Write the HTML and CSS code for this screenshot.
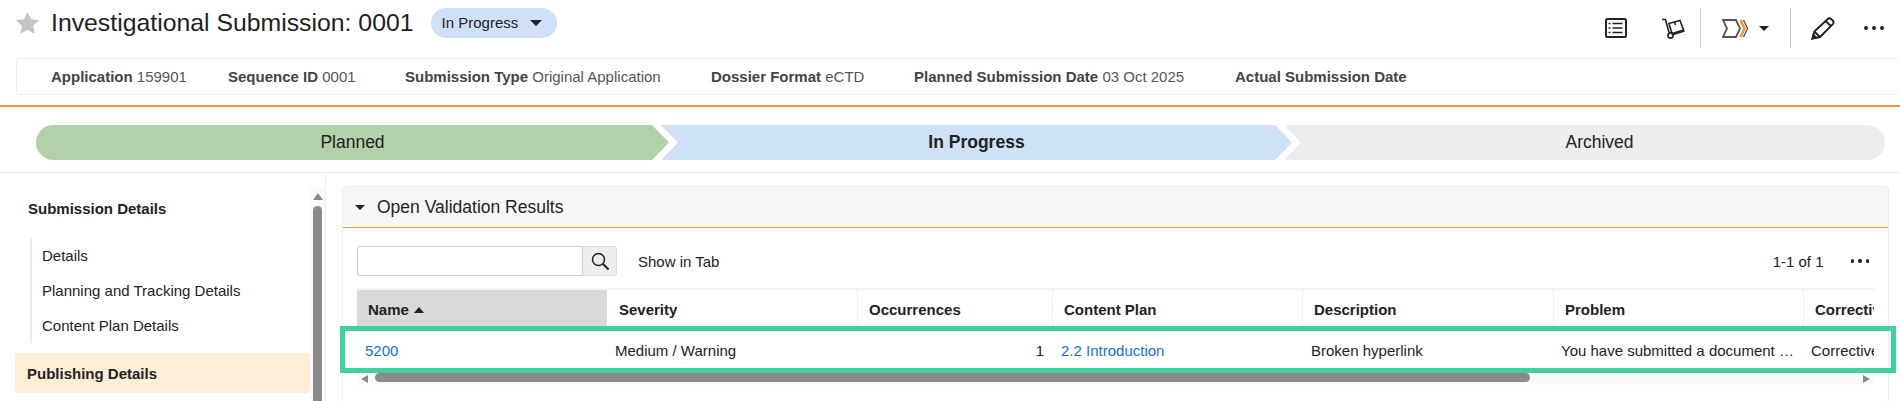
FILE: index.html
```html
<!DOCTYPE html>
<html lang="en">
<head>
  <meta charset="UTF-8">
  <meta name="viewport" content="width=device-width, initial-scale=1.0">
  <title>Investigational Submission: 0001</title>
  <link rel="stylesheet" href="styles.css">
</head>
<body>

  <!-- Title row -->
  <div class="top">
    <svg class="star" viewBox="0 0 24 23"><path d="M12 0l3.600 7.700 8.400 1-6.200 5.700 1.700 8.300L12 18.600 4.500 22.700l1.700-8.300L0 8.700l8.400-1z"/></svg>
    <h1 class="title">Investigational Submission: 0001</h1>
    <div class="pill">In Progress <span class="caret"></span></div>

    <div class="actions">
      <svg class="act-list" viewBox="0 0 22 20" fill="none" stroke="#222">
        <rect x="1" y="1" width="20" height="18" rx="1.500" stroke-width="2"/>
        <path d="M7.500 5.500h10M7.500 10h10M7.500 14.500h10" stroke-width="1.600"/>
        <path d="M3.500 5.500h2M3.500 10h2M3.500 14.500h2" stroke-width="1.600"/>
      </svg>
      <svg class="act-cart" viewBox="0 0 23 21" fill="none" stroke="#222" stroke-width="1.600">
        <path d="M0 1.500h3.500l3.500 13"/>
        <circle cx="8.500" cy="17.500" r="2.600"/>
        <path d="M11 16.500l11.500-3.500"/>
        <path d="M7 5.500l11-3 3.500 9.500-11.500 3.500z"/>
        <path d="M12.500 4l1 3"/>
      </svg>
      <span class="sep"></span>
      <svg class="act-stage" viewBox="0 0 27 19" fill="none" stroke-width="1.800">
        <path d="M1 1h13l4 8.500-4 8.500H1l4-8.500z" stroke="#555"/>
        <path d="M18.500 1l4 8.500-4 8.500" stroke="#f09a2e" stroke-width="2.600"/>
        <path d="M21.500 1l4 8.500-4 8.500" stroke="#555" stroke-width="1.400"/>
      </svg>
      <span class="caret act-caret"></span>
      <span class="sep"></span>
      <svg class="act-pencil" viewBox="0 0 24 23" fill="none" stroke="#222" stroke-width="1.900">
        <path d="M1.500 21.500l1.800-7L16.500 2.200c1.200-1.100 2.800-1.100 3.900 0l1.300 1.300c1.100 1.200 1 2.800-.1 3.900L9 20z"/>
        <path d="M3.300 14.500L9 20M14.500 4l5.800 5.500"/>
        <path d="M1.500 21.500l3.500-1-2.500-2.500z" fill="#222"/>
      </svg>
      <span class="dots"><i></i><i></i><i></i></span>
    </div>
  </div>

  <!-- Summary fields -->
  <div class="meta">
    <span class="field f1"><b>Application</b> 159901</span>
    <span class="field f2"><b>Sequence ID</b> 0001</span>
    <span class="field f3"><b>Submission Type</b> Original Application</span>
    <span class="field f4"><b>Dossier Format</b> eCTD</span>
    <span class="field f5"><b>Planned Submission Date</b> 03 Oct 2025</span>
    <span class="field"><b>Actual Submission Date</b></span>
  </div>

  <div class="rule"></div>

  <!-- Lifecycle stages -->
  <div class="stages">
    <div class="stage planned">Planned</div>
    <div class="stage current">In Progress</div>
    <div class="stage archived">Archived</div>
  </div>

  <div class="main">
    <div class="side">
      <div class="side-nav">
        <div class="nav-head">Submission Details</div>
        <ul class="nav-sub">
          <li>Details</li>
          <li>Planning and Tracking Details</li>
          <li>Content Plan Details</li>
        </ul>
        <div class="nav-head nav-active">Publishing Details</div>
      </div>
      <div class="side-scroll">
        <span class="arrow-up"></span>
        <span class="side-thumb"></span>
      </div>
    </div>

    <div class="content">
      <div class="panel">
        <div class="panel-head">
          <span class="caret panel-caret"></span>
          <span>Open Validation Results</span>
        </div>
        <div class="panel-body">
          <div class="tools">
            <input class="search" type="text">
            <button class="search-btn">
              <svg viewBox="0 0 18 18" width="18" height="18" fill="none" stroke="#222" stroke-width="1.500"><circle cx="7.500" cy="7.500" r="6"/><path d="M12 12l5.500 5.500" stroke-width="2"/></svg>
            </button>
            <span class="show-tab">Show in Tab</span>
            <span class="count">1-1 of 1</span>
            <span class="dots small"><i></i><i></i><i></i></span>
          </div>

          <div class="grid-wrap">
            <div class="row head">
              <div class="c c-name sorted">Name<span class="sort-up"></span></div>
              <div class="c c-sev">Severity</div>
              <div class="c c-occ">Occurrences</div>
              <div class="c c-plan">Content Plan</div>
              <div class="c c-desc">Description</div>
              <div class="c c-prob">Problem</div>
              <div class="c c-corr">Corrective Action</div>
            </div>
            <div class="row body-row">
              <div class="c c-name"><a href="#">5200</a></div>
              <div class="c c-sev">Medium / Warning</div>
              <div class="c c-occ num">1</div>
              <div class="c c-plan"><a href="#">2.2 Introduction</a></div>
              <div class="c c-desc">Broken hyperlink</div>
              <div class="c c-prob">You have submitted a document that contains a broken link</div>
              <div class="c c-corr">Corrective action</div>
            </div>
            <div class="hscroll">
              <span class="arrow-left"></span>
              <span class="h-thumb"></span>
              <span class="arrow-right"></span>
            </div>
            <!-- highlight box over the row -->
            <div class="mark"></div>
          </div>
        </div>
      </div>
    </div>
  </div>

</body>
</html>
```

FILE: styles.css
```css
* {
  margin: 0;
  padding: 0;
  box-sizing: border-box;
}

html, body {
  height: 401px;
  overflow: hidden;
  background: #fff;
  font-family: "Liberation Sans", Arial, sans-serif;
  font-size: 15px;
  color: #222;
}

.caret {
  display: inline-block;
  width: 0;
  height: 0;
  border-left: 6px solid transparent;
  border-right: 6px solid transparent;
  border-top: 6px solid #222;
}

/* Title row */
.top {
  display: flex;
  align-items: center;
  height: 46px;
  padding-left: 16px;
}

.star {
  width: 23px;
  height: 22px;
  fill: #c4c4c4;
}

.title {
  font-size: 24.800px;
  font-weight: 400;
  margin-left: 12px;
  color: #1f1f1f;
}

.pill {
  display: flex;
  align-items: center;
  height: 30px;
  width: 126px;
  margin-left: 17px;
  margin-top: -1px;
  padding-left: 11px;
  border-radius: 15px;
  background: #cfe0f9;
}

.pill .caret {
  margin-left: 12px;
}

.actions {
  display: flex;
  align-items: center;
  margin-left: auto;
  height: 46px;
  padding-top: 10px;
}

.act-list {
  width: 22px;
  height: 20px;
  margin-right: 35px;
}

.act-cart {
  width: 23px;
  height: 21px;
  margin-right: 15px;
}

.sep {
  display: block;
  width: 1px;
  height: 40px;
  background: #c8c8c8;
}

.act-stage {
  width: 27px;
  height: 19px;
  margin-left: 21px;
}

.act-caret {
  margin-left: 10px;
  margin-right: 21px;
  border-left-width: 5px;
  border-right-width: 5px;
  border-top-width: 5px;
}

.act-pencil {
  width: 24px;
  height: 23px;
  margin-left: 20px;
}

.dots {
  display: flex;
  gap: 4px;
  margin-left: 29px;
  margin-right: 16px;
}

.dots i {
  display: block;
  width: 4px;
  height: 4px;
  border-radius: 50%;
  background: #222;
}

/* Summary fields */
.meta {
  display: flex;
  align-items: center;
  height: 37px;
  margin: 12px 0 0 16px;
  padding-left: 34px;
  border: 1px solid #eee;
  border-right: none;
  border-radius: 3px 0 0 3px;
  color: #555;
}

.field b {
  color: #444;
}

.f1 { width: 177px; }
.f2 { width: 177px; }
.f3 { width: 306px; }
.f4 { width: 203px; }
.f5 { width: 321px; }

.rule {
  height: 2px;
  margin-top: 10px;
  background: #f09a2e;
}

/* Lifecycle stages */
.stages {
  display: flex;
  height: 35px;
  margin: 18px 15px 0 36px;
  font-size: 17.500px;
}

.stage {
  display: flex;
  align-items: center;
  justify-content: center;
}

.planned {
  width: 633px;
  background: #b2d1a8;
  border-radius: 18px 0 0 18px;
  clip-path: polygon(0 0, 616px 0, 100% 50%, 616px 100%, 0 100%);
}

.current {
  width: 631px;
  margin-left: -8px;
  background: #cfe0f9;
  font-weight: 700;
  clip-path: polygon(0 0, 614px 0, 100% 50%, 614px 100%, 0 100%, 17px 50%);
}

.archived {
  flex: 1;
  margin-left: -8px;
  padding-left: 30px;
  background: #ededed;
  border-radius: 0 18px 18px 0;
  clip-path: polygon(0 0, 100% 0, 100% 100%, 0 100%, 17px 50%);
}

/* Sidebar and content */
.main {
  display: flex;
  height: 229px;
  margin-top: 12px;
  border-top: 1px solid #eee;
  overflow: hidden;
}

.side {
  display: flex;
  flex: none;
  width: 326px;
  border-right: 1px solid #eee;
}

.side-nav {
  width: 310px;
  padding: 17px 0 0 15px;
}

.nav-head {
  height: 40px;
  padding-left: 13px;
  line-height: 38px;
  font-weight: 700;
}

.nav-sub {
  list-style: none;
  margin: 8px 0 10px 15px;
  padding-left: 10px;
  border-left: 2px solid #eee;
}

.nav-sub li {
  height: 35px;
  line-height: 35px;
}

.nav-active {
  padding-left: 12px;
  background: #feeed6;
  border-radius: 2px;
  line-height: 41px;
}

.side-scroll {
  display: flex;
  flex-direction: column;
  align-items: center;
  width: 15px;
  margin-top: 15px;
  padding-top: 5px;
  background: #fafafa;
}

.arrow-up {
  width: 0;
  height: 0;
  border-left: 5px solid transparent;
  border-right: 5px solid transparent;
  border-bottom: 7px solid #8b8b8b;
}

.side-thumb {
  flex: 1;
  width: 9px;
  margin-top: 6px;
  background: #8b8b8b;
  border-radius: 5px 5px 0 0;
}

.content {
  flex: 1;
  min-width: 0;
  padding: 13px 11px 0 16px;
}

.panel {
  height: 216px;
  border: 1px solid #eee;
  border-radius: 3px;
}

.panel-head {
  display: flex;
  align-items: center;
  height: 41px;
  padding-left: 12px;
  background: #f7f7f7;
  border-bottom: 1px solid #f09a2e;
  font-size: 17.500px;
}

.panel-caret {
  margin-right: 12px;
  border-left-width: 5px;
  border-right-width: 5px;
  border-top-width: 5px;
}

.panel-body {
  padding: 18px 14px 0 14px;
}

.tools {
  display: flex;
  align-items: center;
  height: 30px;
}

.search {
  width: 226px;
  height: 30px;
  border: 1px solid #ccc;
  border-radius: 3px 0 0 3px;
}

.search-btn {
  display: flex;
  align-items: center;
  justify-content: center;
  width: 34px;
  height: 30px;
  background: #eee;
  border: 1px solid #ddd;
  border-left: none;
  border-radius: 0 3px 3px 0;
}

.show-tab {
  margin-left: 21px;
}

.count {
  margin-left: auto;
}

.dots.small {
  margin: 0 5px 0 27px;
}

.dots.small i {
  width: 3.500px;
  height: 3.500px;
}

.grid-wrap {
  position: relative;
  margin-top: 12px;
}

.row {
  display: flex;
  overflow: hidden;
}

.head {
  height: 38px;
  border-top: 2px solid #f3f3f3;
  font-weight: 700;
}

.head .c {
  line-height: 40px;
  padding-left: 11px;
  border-right: 1px solid #eee;
}

.head .sorted {
  background: #d9d9d9;
  border-right: none;
}

.head .c-sev {
  padding-left: 12px;
}

.sort-up {
  display: inline-block;
  width: 0;
  height: 0;
  margin-left: 5px;
  margin-bottom: 2px;
  border-left: 5px solid transparent;
  border-right: 5px solid transparent;
  border-bottom: 6px solid #222;
}

.body-row {
  height: 47px;
  padding-top: 2px;
  align-items: center;
}

.body-row .c {
  padding: 0 13px 0 8px;
}

.body-row .c-prob {
  padding: 0 10px 0 7px;
}

.body-row .c-corr {
  padding-left: 7px;
}

.body-row .num {
  padding: 0 9px 0 0;
  text-align: right;
}

.c {
  flex: none;
  white-space: nowrap;
  overflow: hidden;
  text-overflow: ellipsis;
}

.c-name { width: 250px; }
.c-sev { width: 251px; }
.c-occ { width: 195px; }
.c-plan { width: 250px; }
.c-desc { width: 251px; }
.c-prob { width: 250px; }
.c-corr { width: 120px; text-overflow: clip; }

a {
  color: #1a6fd6;
  text-decoration: none;
}

.hscroll {
  display: flex;
  align-items: center;
  height: 12px;
  padding: 0 4px;
  background: #fafafa;
}

.arrow-left {
  width: 0;
  height: 0;
  border-top: 4px solid transparent;
  border-bottom: 4px solid transparent;
  border-right: 7px solid #8b8b8b;
}

.h-thumb {
  width: 1155px;
  height: 9px;
  margin-left: 7px;
  margin-top: -3px;
  background: #8b8b8b;
  border-radius: 5px;
}

.arrow-right {
  width: 0;
  height: 0;
  margin-left: auto;
  border-top: 4px solid transparent;
  border-bottom: 4px solid transparent;
  border-left: 7px solid #8b8b8b;
}

.mark {
  position: absolute;
  left: -17px;
  top: 38px;
  width: 1556px;
  height: 47px;
  border: 5px solid #3ed29f;
}
```
